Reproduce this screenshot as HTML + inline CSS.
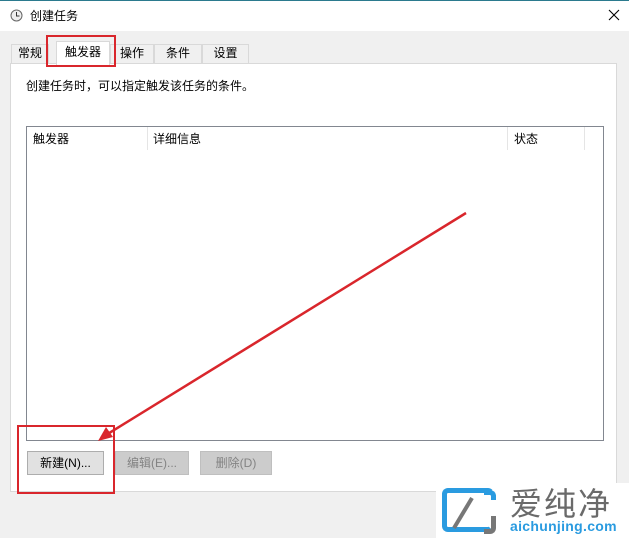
<!DOCTYPE html>
<html><head><meta charset="utf-8"><style>
*{margin:0;padding:0;box-sizing:border-box}
body{width:629px;height:538px;overflow:hidden;background:#f0f0f0;position:relative;font-family:"Liberation Sans","Microsoft YaHei","Noto Sans CJK SC",sans-serif;font-size:12px;color:#000}
.abs{position:absolute}
.title{left:0;top:0;width:629px;height:31px;background:#fff;border-top:1px solid #2b7a8e}
.tab{top:44px;height:20px;background:#f0f0f0;border:1px solid #d9d9d9;border-bottom:none;text-align:center;line-height:17px}
.panel{left:10px;top:63px;width:607px;height:429px;background:#fff;border:1px solid #d9d9d9}
.btn{top:451px;height:24px;border:1px solid #adadad;background:#e1e1e1;text-align:center;line-height:22px}
.dis{color:#838383;background:#cccccc;border-color:#bfbfbf}
.red{border:2px solid #d9262c}
</style></head><body>
<div class="abs title">
<svg class="abs" style="left:10px;top:8px" width="13" height="13" viewBox="0 0 13 13"><circle cx="6.5" cy="6.5" r="5.5" fill="#eee" stroke="#666"/><path d="M6.5 3v4h3" stroke="#333" fill="none"/></svg>
<div class="abs" style="left:30px;top:6px">创建任务</div>
<svg class="abs" style="left:608px;top:8px" width="12" height="12"><path d="M1 1L11 11M11 1L1 11" stroke="#000" stroke-width="1.1"/></svg>
</div>
<div class="abs tab" style="left:11px;width:38px">常规</div>
<div class="abs tab" style="left:110px;width:44px">操作</div>
<div class="abs tab" style="left:154px;width:48px">条件</div>
<div class="abs tab" style="left:202px;width:47px">设置</div>
<div class="abs panel"></div>
<div class="abs tab" style="left:56px;top:41px;width:54px;height:24px;background:#fff;line-height:20px">触发器</div>
<div class="abs" style="left:26px;top:77px">创建任务时，可以指定触发该任务的条件。</div>
<div class="abs" style="left:26px;top:126px;width:578px;height:315px;border:1px solid #828790;background:#fff">
<div class="abs" style="left:6px;top:3px">触发器</div>
<div class="abs" style="left:120px;top:0;width:1px;height:23px;background:#e5e5e5"></div>
<div class="abs" style="left:126px;top:3px">详细信息</div>
<div class="abs" style="left:480px;top:0;width:1px;height:23px;background:#e5e5e5"></div>
<div class="abs" style="left:487px;top:3px">状态</div>
<div class="abs" style="left:557px;top:0;width:1px;height:23px;background:#e5e5e5"></div>
</div>
<div class="abs btn" style="left:27px;width:77px">新建(N)...</div>
<div class="abs btn dis" style="left:115px;width:74px">编辑(E)...</div>
<div class="abs btn dis" style="left:200px;width:72px">删除(D)</div>
<div class="abs red" style="left:46px;top:35px;width:70px;height:32px"></div>
<div class="abs red" style="left:17px;top:425px;width:98px;height:69px"></div>
<svg class="abs" style="left:0;top:0" width="629" height="538"><line x1="466" y1="213" x2="106" y2="435" stroke="#d9262c" stroke-width="2.5"/><path d="M98 441 L106 427 L113 437 Z" fill="#d9262c"/></svg>
<div class="abs" style="left:436px;top:483px;width:193px;height:55px;background:#fff"></div>
<div class="abs" style="left:442px;top:488px;width:52px;height:44px;border:5px solid #2a9be0;border-right-color:transparent;border-radius:6px"></div>
<div class="abs" style="left:484px;top:490px;width:12px;height:10px;border-top:5px solid #2a9be0;border-right:5px solid #2a9be0;border-radius:0 6px 0 0"></div>
<div class="abs" style="left:484px;top:516px;width:12px;height:18px;border-bottom:5px solid #777;border-right:5px solid #777;border-radius:0 0 6px 0"></div>
<svg class="abs" style="left:440px;top:488px" width="50" height="46"><line x1="14" y1="40" x2="32" y2="10" stroke="#777" stroke-width="4"/></svg>
<div class="abs" style="left:510px;top:482px;font-size:32px;color:#6a6a6a;letter-spacing:2px;font-family:'Noto Sans CJK SC',sans-serif;line-height:40px">爱纯净</div>
<div class="abs" style="left:510px;top:517px;font-size:14px;font-weight:bold;color:#2a9be0;line-height:18px;letter-spacing:0.3px">aichunjing.com</div>
</body></html>
